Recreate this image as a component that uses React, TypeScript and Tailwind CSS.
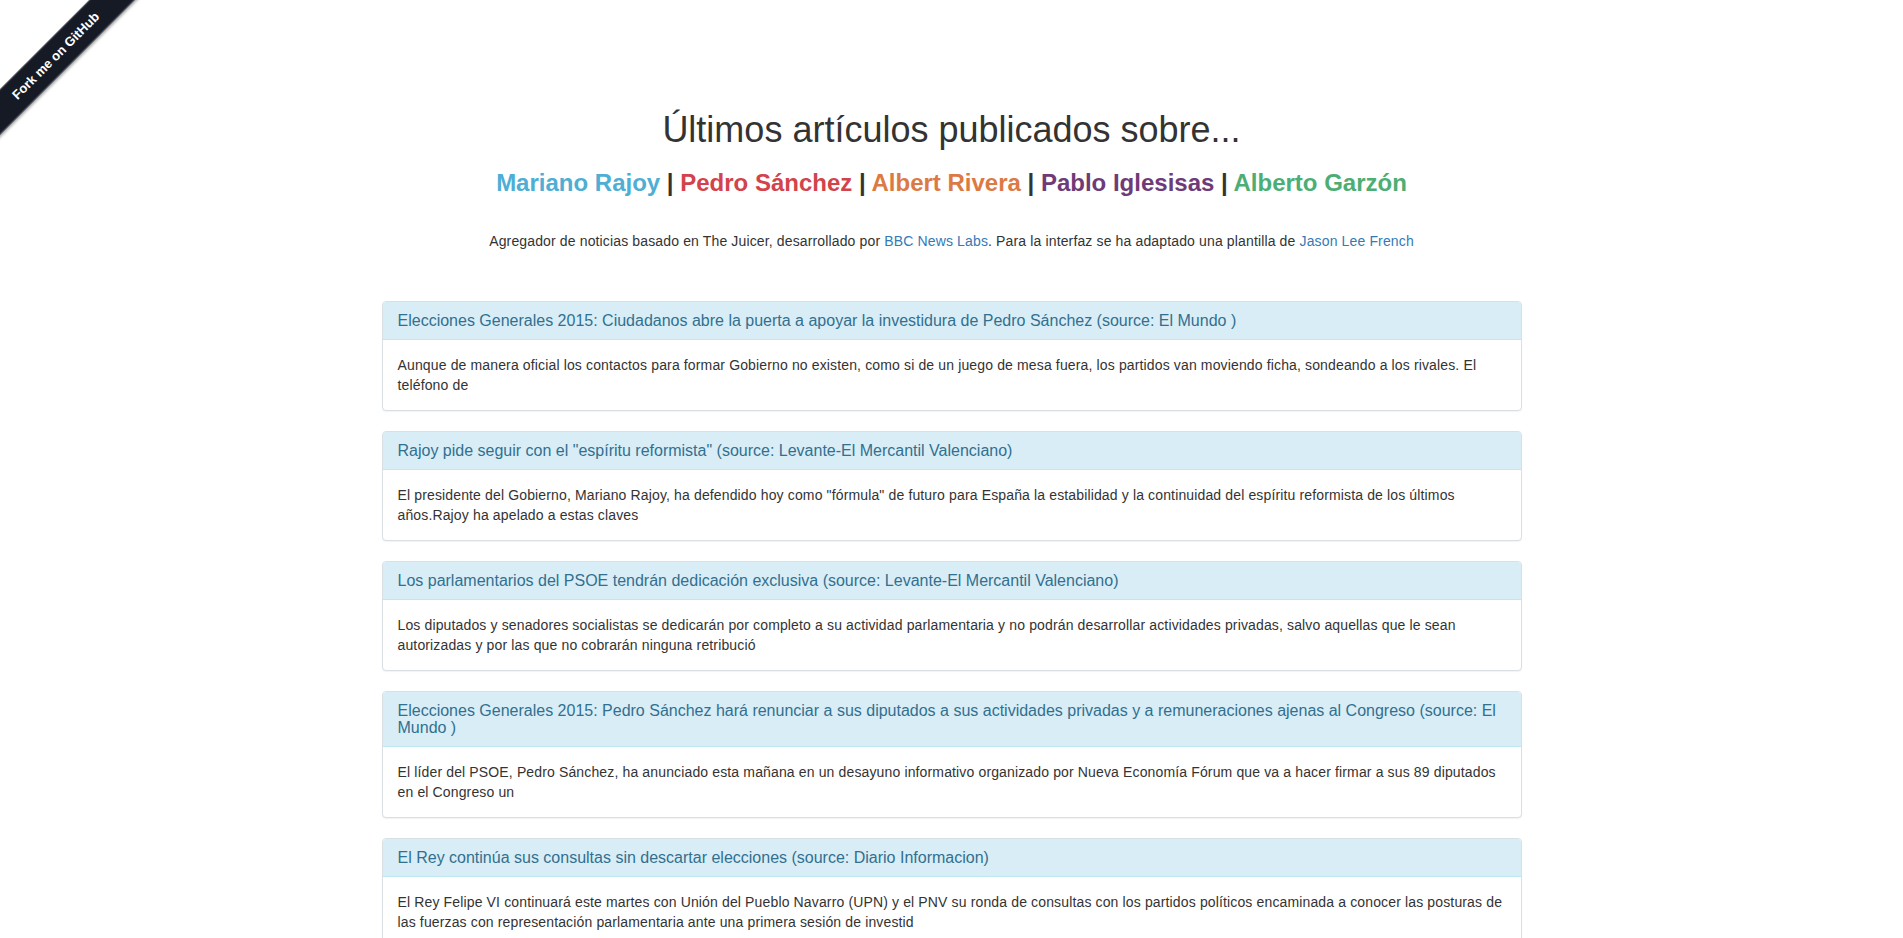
const articles = [
  {
    title: 'Elecciones Generales 2015: Ciudadanos abre la puerta a apoyar la investidura de Pedro Sánchez (source: El Mundo )',
    body: 'Aunque de manera oficial los contactos para formar Gobierno no existen, como si de un juego de mesa fuera, los partidos van moviendo ficha, sondeando a los rivales. El teléfono de',
  },
  {
    title: 'Rajoy pide seguir con el "espíritu reformista" (source: Levante-El Mercantil Valenciano)',
    body: 'El presidente del Gobierno, Mariano Rajoy, ha defendido hoy como "fórmula" de futuro para España la estabilidad y la continuidad del espíritu reformista de los últimos años.Rajoy ha apelado a estas claves',
  },
  {
    title: 'Los parlamentarios del PSOE tendrán dedicación exclusiva (source: Levante-El Mercantil Valenciano)',
    body: 'Los diputados y senadores socialistas se dedicarán por completo a su actividad parlamentaria y no podrán desarrollar actividades privadas, salvo aquellas que le sean autorizadas y por las que no cobrarán ninguna retribució',
  },
  {
    title: 'Elecciones Generales 2015: Pedro Sánchez hará renunciar a sus diputados a sus actividades privadas y a remuneraciones ajenas al Congreso (source: El Mundo )',
    body: 'El líder del PSOE, Pedro Sánchez, ha anunciado esta mañana en un desayuno informativo organizado por Nueva Economía Fórum que va a hacer firmar a sus 89 diputados en el Congreso un',
  },
  {
    title: 'El Rey continúa sus consultas sin descartar elecciones (source: Diario Informacion)',
    body: 'El Rey Felipe VI continuará este martes con Unión del Pueblo Navarro (UPN) y el PNV su ronda de consultas con los partidos políticos encaminada a conocer las posturas de las fuerzas con representación parlamentaria ante una primera sesión de investid',
  },
];

// Ribbon "Fork me on GitHub" en la esquina
function ForkRibbon() {
  return (
    <a
      href="#"
      className="absolute left-[-64px] top-[40px] flex h-[32px] w-[240px] -rotate-45 items-center justify-center border-y border-[#4a505a] bg-[#151a24] text-[13px] font-bold text-white shadow-[0_2px_3px_rgba(0,0,0,0.35)]"
    >
      Fork me on GitHub
    </a>
  );
}

function ArticlePanel({ title, body }: { title: string; body: string }) {
  return (
    <div className="mb-[20px] rounded-[4px] border border-[#d9dfe3] bg-white shadow-[0_1px_1px_rgba(0,0,0,0.05)]">
      <div className="rounded-t-[3px] border-b border-[#bce8f1] bg-[#d9edf7] px-[15px] py-[10px] text-[16px] leading-[17px] text-[#31708f]">
        {title}
      </div>
      <div className="p-[15px] text-[14px] leading-[20px] tracking-[0.14px] text-[#333]">{body}</div>
    </div>
  );
}

export default function App() {
  return (
    <div className="relative min-h-screen overflow-hidden bg-white font-['Liberation_Sans',Arial,sans-serif] text-[#333]">
      <ForkRibbon />

      <div className="mx-auto w-[1170px] px-[15px] pt-[110px]">
        {/* Cabecera */}
        <h1 className="text-center text-[36px] leading-[1.1] font-normal">Últimos artículos publicados sobre...</h1>
        <h3 className="mt-[20px] text-center text-[24px] leading-[1.1] font-bold">
          <a href="#" className="text-[#4eaed4]">Mariano Rajoy</a> |{' '}
          <a href="#" className="text-[#d2434b]">Pedro Sánchez</a> |{' '}
          <a href="#" className="text-[#dc7a43]">Albert Rivera</a> |{' '}
          <a href="#" className="text-[#6e3b78]">Pablo Iglesisas</a> |{' '}
          <a href="#" className="text-[#4cae74]">Alberto Garzón</a>
        </h3>
        <p className="mt-[35px] text-center text-[14px] leading-[20px] tracking-[0.14px]">
          Agregador de noticias basado en The Juicer, desarrollado por{' '}
          <a href="#" className="text-[#337ab7]">BBC News Labs</a>. Para la interfaz se ha adaptado una plantilla de{' '}
          <a href="#" className="text-[#337ab7]">Jason Lee French</a>
        </p>

        {/* Listado de artículos */}
        <div className="mt-[50px]">
          {articles.map((a) => (
            <ArticlePanel key={a.title} title={a.title} body={a.body} />
          ))}
        </div>
      </div>
    </div>
  );
}
